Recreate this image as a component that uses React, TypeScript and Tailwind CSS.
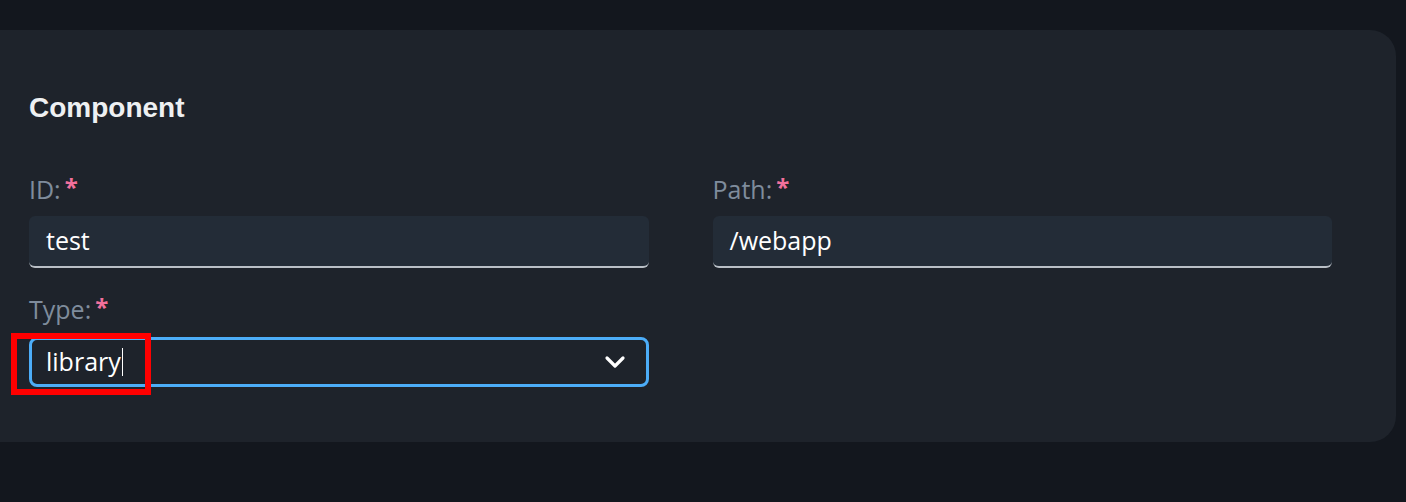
import React from 'react';

const Label: React.FC<{ text: string }> = ({ text }) => (
  <div className="flex items-center gap-[4px] h-[26px] text-[25px] leading-none text-[#7f8c9c]">
    <span>{text}</span>
    <span className="text-[#f2709c] font-bold text-[24px] -mt-[4px]">*</span>
  </div>
);

const TextField: React.FC<{ value: string }> = ({ value }) => (
  <div className="flex items-center h-[52px] px-[17px] rounded-[6px] bg-[#232c37] border-b-2 border-[#b9bfc6] text-[25px] text-white">
    {value}
  </div>
);

export default function App() {
  return (
    <div
      className="w-[1406px] h-[502px] bg-[#13171e] pt-[30px] overflow-hidden"
      style={{ fontFamily: '"Open Sans", "Liberation Sans", sans-serif' }}
    >
      <div className="w-[1396px] h-[412px] bg-[#1e232b] rounded-r-[26px] pl-[29px] pr-[64px] pt-[62px] relative">
        <h2 className="text-[28px] leading-[32px] font-bold text-[#eef0f2]" style={{ fontFamily: '"Liberation Sans", sans-serif' }}>
          Component
        </h2>

        <div className="grid grid-cols-2 gap-x-[64px] mt-[52px]">
          <div className="flex flex-col gap-[14px]">
            <Label text="ID:" />
            <TextField value="test" />
          </div>
          <div className="flex flex-col gap-[14px]">
            <Label text="Path:" />
            <TextField value="/webapp" />
          </div>
        </div>

        <div className="grid grid-cols-2 gap-x-[64px] mt-[28px]">
          <div className="flex flex-col gap-[15px]">
            <Label text="Type:" />
            <div className="relative flex items-center justify-between h-[50px] pl-[14px] pr-[20px] rounded-[8px] border-[3px] border-[#4cadf8] bg-[#1e232b] text-[25px] text-white">
              <span className="flex items-center">
                library
                <span className="inline-block w-[1.5px] h-[28px] bg-white ml-[1px]" />
              </span>
              <svg width="22" height="14" viewBox="0 0 22 14" fill="none">
                <path d="M3 3l8 8 8-8" stroke="#ffffff" strokeWidth="3.2" strokeLinecap="round" strokeLinejoin="round" />
              </svg>
              {/* annotation box */}
              <div className="absolute left-[-21px] top-[-7px] w-[140px] h-[62px] border-[6px] border-[#ff0000]" />
            </div>
          </div>
          <div />
        </div>
      </div>
    </div>
  );
}
